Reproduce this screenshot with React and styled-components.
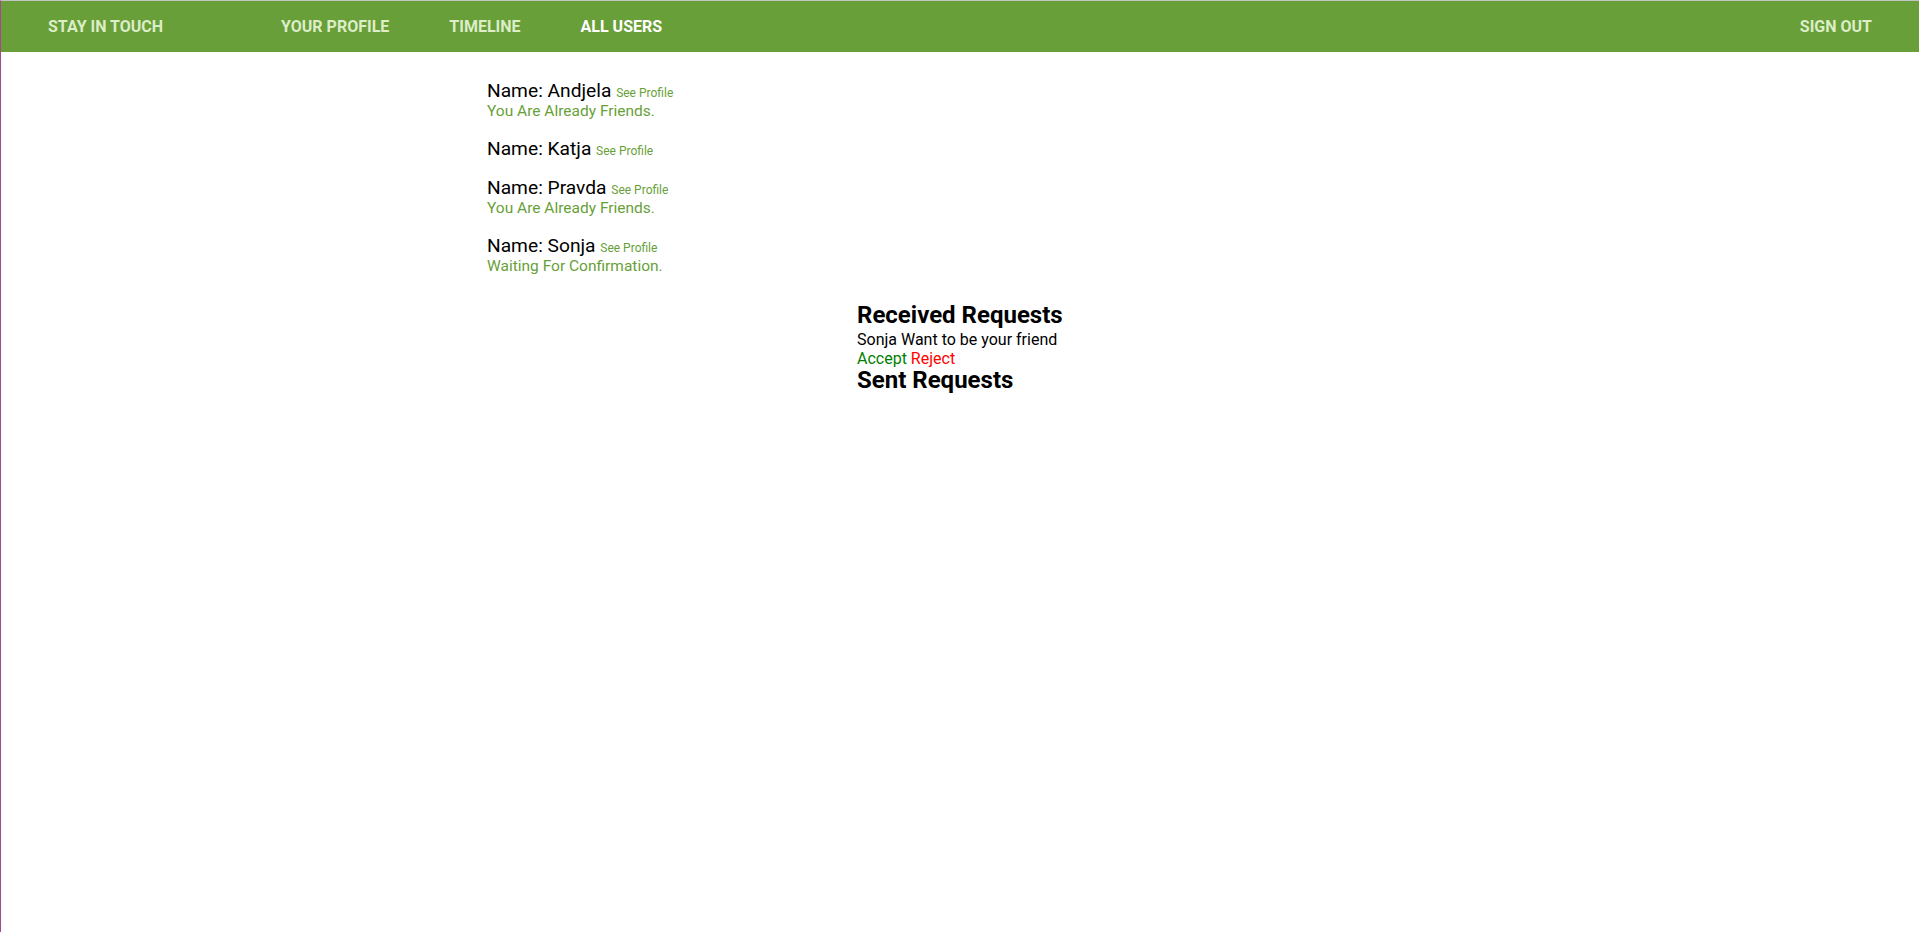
import React from "react";
import styled, { createGlobalStyle } from "styled-components";

const GlobalStyle = createGlobalStyle`
  html, body {
    margin: 0;
    padding: 0;
    background: #ffffff;
  }
  body {
    font-family: Roboto, "Liberation Sans", Arial, sans-serif;
    color: #000000;
  }
  * { box-sizing: border-box; }
`;

const Page = styled.div`
  min-height: 100vh;
  border-left: 1px solid #a4478b;
  border-top: 1px solid #c4c4c4;
`;

const Nav = styled.nav`
  display: flex;
  align-items: center;
  height: 51px;
  padding: 0 47px;
  background: #689f38;
  font-family: Roboto, "Liberation Sans", Arial, sans-serif;
  font-weight: 700;
  font-size: 16px;
  text-transform: uppercase;
`;

const Brand = styled.a`
  color: #dcedc8;
  text-decoration: none;
  margin-right: 88px;
  white-space: nowrap;
`;

const NavLinks = styled.ul`
  display: flex;
  list-style: none;
  margin: 0;
  padding: 0;
`;

const NavItem = styled.li`
  display: block;
`;

const NavLink = styled.a`
  display: block;
  padding: 0 30px;
  color: ${(p) => (p.$active ? "#ffffff" : "#dcedc8")};
  text-decoration: none;
  white-space: nowrap;
`;

const SignOut = styled.a`
  margin-left: auto;
  color: #dcedc8;
  text-decoration: none;
  white-space: nowrap;
`;

const Main = styled.main`
  padding: 27px 0 0 486px;
`;

const UserList = styled.div`
  display: flex;
  flex-direction: column;
`;

const UserItem = styled.div`
  margin-bottom: 16.5px;
`;

const NameLine = styled.div`
  font-size: 19.2px;
`;

const SeeProfile = styled.a`
  font-size: 12px;
  color: #689f38;
  text-decoration: none;
`;

const Status = styled.div`
  font-size: 15.5px;
  color: #689f38;
`;

const Requests = styled.section`
  margin: 12px 0 0 370px;
`;

const Heading = styled.h3`
  margin: 0 0 ${(p) => p.$gap || "0px"} 0;
  font-size: 24px;
  line-height: 24px;
  font-weight: 700;
`;

const RequestText = styled.div`
  font-size: 16px;
`;

const Actions = styled.div`
  font-size: 16px;
`;

const Action = styled.a`
  color: ${(p) => (p.$tone === "reject" ? "#ff0000" : "#008000")};
  text-decoration: none;
  cursor: pointer;
`;

const users = [
  { name: "Andjela", status: "You Are Already Friends." },
  { name: "Katja", status: null },
  { name: "Pravda", status: "You Are Already Friends." },
  { name: "Sonja", status: "Waiting For Confirmation." },
];

export default function App() {
  return (
    <>
      <GlobalStyle />
      <Page>
        <Nav>
          <Brand>Stay in touch</Brand>
          <NavLinks>
            <NavItem><NavLink>Your profile</NavLink></NavItem>
            <NavItem><NavLink>Timeline</NavLink></NavItem>
            <NavItem><NavLink $active>All users</NavLink></NavItem>
          </NavLinks>
          <SignOut>Sign out</SignOut>
        </Nav>
        <Main>
          <UserList>
            {users.map((u) => (
              <UserItem key={u.name}>
                <NameLine>
                  Name: {u.name} <SeeProfile>See Profile</SeeProfile>
                </NameLine>
                {u.status && <Status>{u.status}</Status>}
              </UserItem>
            ))}
          </UserList>
          <Requests>
            <Heading $gap="3.4px">Received Requests</Heading>
            <RequestText>Sonja Want to be your friend</RequestText>
            <Actions>
              <Action $tone="accept">Accept</Action>{" "}
              <Action $tone="reject">Reject</Action>
            </Actions>
            <Heading>Sent Requests</Heading>
          </Requests>
        </Main>
      </Page>
    </>
  );
}
